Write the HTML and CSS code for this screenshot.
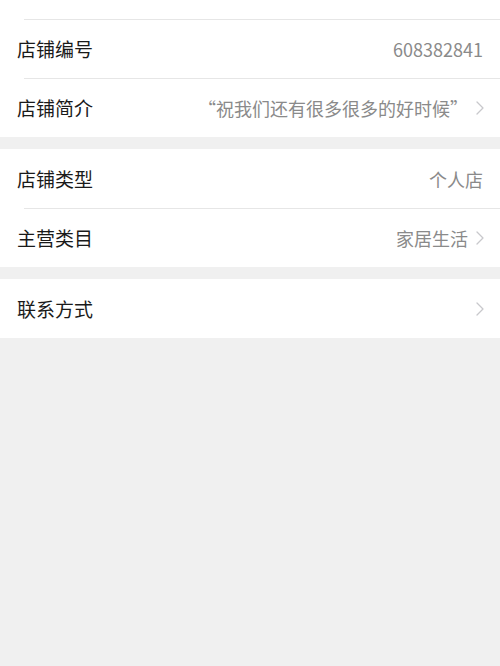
FILE: index.html
```html
<!DOCTYPE html>
<html lang="zh-CN">
<head>
    <meta charset="UTF-8">
    <meta name="viewport" content="width=device-width, initial-scale=1.0">
    <title>店铺信息</title>
    <link rel="stylesheet" href="styles.css">
</head>
<body>
    <div class="page">
        <!-- 基本信息 -->
        <div class="group group-first">
            <div class="row">
                <div class="row-label">店铺名称</div>
            </div>
            <div class="row">
                <div class="row-label">店铺编号</div>
                <div class="row-value">608382841</div>
            </div>
            <div class="row">
                <div class="row-label">店铺简介</div>
                <div class="row-value">“祝我们还有很多很多的好时候”</div>
                <svg class="chevron" width="8" height="14" viewBox="0 0 8 14" fill="none">
                    <polyline points="1,1 7,7 1,13" stroke="currentColor" stroke-width="1.3" stroke-linecap="round" stroke-linejoin="round"/>
                </svg>
            </div>
        </div>

        <!-- 类型 -->
        <div class="group">
            <div class="row">
                <div class="row-label">店铺类型</div>
                <div class="row-value">个人店</div>
            </div>
            <div class="row">
                <div class="row-label">主营类目</div>
                <div class="row-value">家居生活</div>
                <svg class="chevron" width="8" height="14" viewBox="0 0 8 14" fill="none">
                    <polyline points="1,1 7,7 1,13" stroke="currentColor" stroke-width="1.3" stroke-linecap="round" stroke-linejoin="round"/>
                </svg>
            </div>
        </div>

        <!-- 联系 -->
        <div class="group">
            <div class="row">
                <div class="row-label">联系方式</div>
                <div class="row-value"></div>
                <svg class="chevron" width="8" height="14" viewBox="0 0 8 14" fill="none">
                    <polyline points="1,1 7,7 1,13" stroke="currentColor" stroke-width="1.3" stroke-linecap="round" stroke-linejoin="round"/>
                </svg>
            </div>
        </div>
    </div>
</body>
</html>
```

FILE: styles.css
```css
:root {
    --surface: #ffffff;
    --background: #f0f0f0;
    --divider: #e6e6e6;
    --text: #1a1a1a;
    --text-light: #8a8a8a;
    --chevron: #c8c8cc;
}

* {
    margin: 0;
    padding: 0;
    box-sizing: border-box;
}

html, body {
    height: 100%;
}

body {
    font-family: "Noto Sans CJK SC", "Noto Sans", sans-serif;
    background: var(--background);
    color: var(--text);
    overflow: hidden;
}

.page {
    display: flex;
    flex-direction: column;
    gap: 12px;
}

.group {
    background: var(--surface);
}

.group-first {
    margin-top: -40px;
}

.row {
    position: relative;
    height: 59px;
    padding: 0 17px;
    display: flex;
    align-items: center;
}

.row + .row::before {
    content: "";
    position: absolute;
    top: 0;
    left: 24px;
    right: 0;
    height: 1px;
    background: var(--divider);
}

.row-label {
    font-size: 19px;
    color: var(--text);
    flex-shrink: 0;
}

.row-value {
    flex: 1;
    text-align: right;
    font-size: 18px;
    color: var(--text-light);
    white-space: nowrap;
}

.chevron {
    color: var(--chevron);
    margin-left: 8px;
    margin-right: -1px;
    flex-shrink: 0;
}
```
